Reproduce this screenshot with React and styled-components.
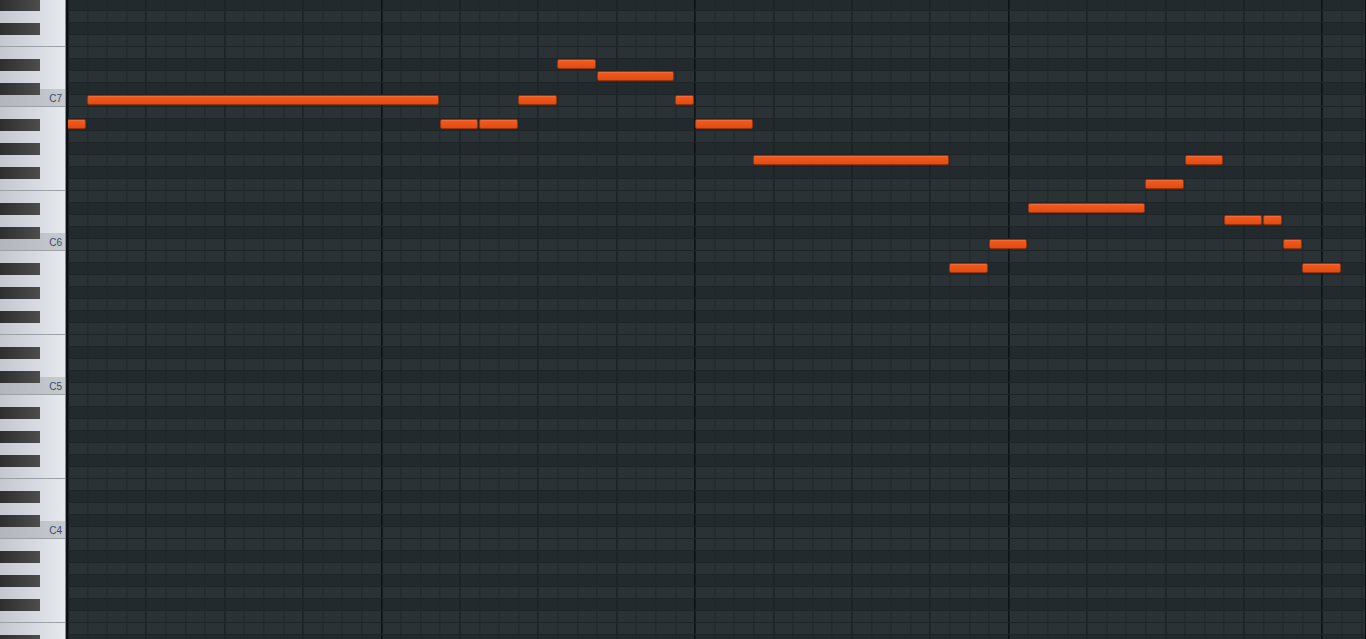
import React from "react";
import styled, { createGlobalStyle } from "styled-components";

const STEP = 19.6;
const ROW = 12;
const TOP_PITCH = 92; // G#7, first row at the top edge
const ROW_COUNT = 54;
const BLACK = [1, 3, 6, 8, 10];
const ORIGIN = -0.6; // where step 0 starts inside the grid

// step, length, pitch (C0 = 0)
const notes = [
  [0, 1, 82],
  [1, 18, 84],
  [19, 2, 82],
  [21, 2, 82],
  [23, 2, 84],
  [25, 2, 87],
  [27, 4, 86],
  [31, 1, 84],
  [32, 3, 82],
  [35, 10, 79],
  [45, 2, 70],
  [47, 2, 72],
  [49, 6, 75],
  [55, 2, 77],
  [57, 2, 79],
  [59, 2, 74],
  [61, 1, 74],
  [62, 1, 72],
  [63, 2, 70],
];

// the C3 key sits below the window edge, so it gets no label
const octaves = [
  { n: 7, label: "C7" },
  { n: 6, label: "C6" },
  { n: 5, label: "C5" },
  { n: 4, label: "C4" },
  { n: 3, label: null },
];
const blackTops = [12, 36, 60, 96, 120];

const Global = createGlobalStyle`
  html, body {
    margin: 0;
    padding: 0;
    height: 100%;
    overflow: hidden;
    background: #262d31;
  }
  #root {
    height: 100%;
  }
`;

const Roll = styled.div`
  display: flex;
  height: 100vh;
  overflow: hidden;
`;

const Keyboard = styled.div`
  width: 65px;
  flex: none;
  border-right: 1px solid #8b9098;
  overflow: hidden;
  background: #dfe2e7;
`;

const KeyStack = styled.div`
  margin-top: -38px;
  display: flex;
  flex-direction: column;
`;

const Octave = styled.div`
  position: relative;
  height: 144px;
  box-sizing: border-box;
  border-top: 1px solid #9ca1a9;
  display: flex;
  flex-direction: column;
  background: linear-gradient(to right, #c4c8ce, #e6e9ee);
`;

const UpperKeys = styled.div`
  height: 83px;
  border-bottom: 1px solid #9ca1a9;
`;

const LowerKeys = styled.div`
  flex: 1;
  display: flex;
  flex-direction: column;
  justify-content: flex-end;
`;

const CKey = styled.div`
  height: 17px;
  display: flex;
  align-items: center;
  justify-content: flex-end;
  padding-right: 3px;
  padding-top: 1px;
  box-sizing: border-box;
  background: linear-gradient(to right, #b2b6bc, #c7cacf);
  font-family: "Liberation Sans", Arial, sans-serif;
  font-size: 10px;
  color: #3b4868;
`;

const BlackKey = styled.div`
  position: absolute;
  left: 0;
  width: 40px;
  height: 12px;
  background: linear-gradient(to right, #2e2e2f, #4d4d4e);
`;

const Grid = styled.div`
  position: relative;
  flex: 1;
  border-left: 2px solid #0e1113;
  overflow: hidden;
`;

const RowStack = styled.div`
  margin-top: -2px;
  display: flex;
  flex-direction: column;
`;

const GridRow = styled.div`
  height: ${ROW}px;
  flex: none;
  box-sizing: border-box;
  border-top: 1px solid #1e2427;
  background-color: ${(p) => (p.$black ? "#232a2d" : "#2a3236")};
  background-image:
    repeating-linear-gradient(90deg, #08090a 0 1px, transparent 1px ${STEP * 16}px),
    repeating-linear-gradient(90deg, #191e21 0 1px, transparent 1px ${STEP * 4}px),
    repeating-linear-gradient(90deg, #20272a 0 1px, transparent 1px ${STEP}px);
  background-position: ${ORIGIN}px 0;
`;

const Note = styled.div`
  position: absolute;
  height: 10px;
  box-sizing: border-box;
  border: 1px solid #96340f;
  border-radius: 2px;
  background: linear-gradient(#f35b1f, #e24b13);
  box-shadow: inset 0 1px 0 rgba(255, 150, 100, 0.25);
`;

const isBlack = (pitch) => BLACK.includes(((pitch % 12) + 12) % 12);

export default function App() {
  const rows = Array.from({ length: ROW_COUNT }, (_, i) => TOP_PITCH - i);

  return (
    <>
      <Global />
      <Roll>
        <Keyboard>
          <KeyStack>
            {octaves.map((o) => (
              <Octave key={o.n}>
                <UpperKeys />
                <LowerKeys>
                  <CKey>{o.label}</CKey>
                </LowerKeys>
                {blackTops.map((t) => (
                  <BlackKey key={t} style={{ top: t }} />
                ))}
              </Octave>
            ))}
          </KeyStack>
        </Keyboard>
        <Grid>
          <RowStack>
            {rows.map((p) => (
              <GridRow key={p} $black={isBlack(p)} />
            ))}
          </RowStack>
          {notes.map(([step, len, pitch], i) => (
            <Note
              key={i}
              style={{
                left: ORIGIN + step * STEP,
                top: (TOP_PITCH - pitch) * ROW - 2 + 1,
                width: len * STEP - 0.6,
              }}
            />
          ))}
        </Grid>
      </Roll>
    </>
  );
}
